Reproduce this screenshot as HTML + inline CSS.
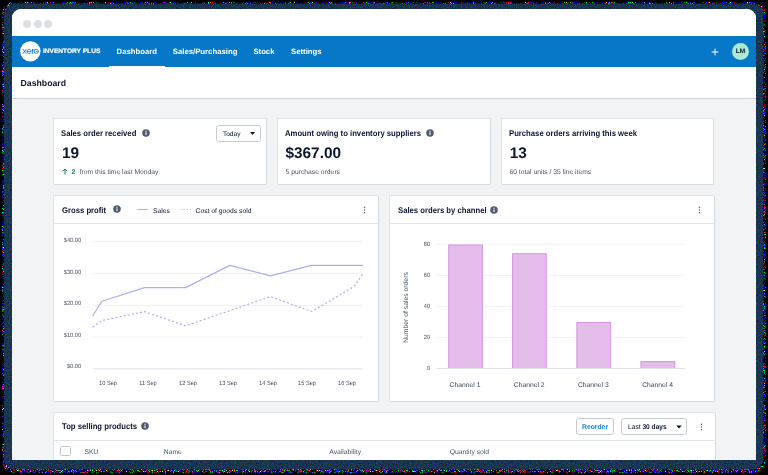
<!DOCTYPE html>
<html><head><meta charset="utf-8">
<style>
*{box-sizing:border-box;margin:0;padding:0}
html,body{width:768px;height:475px;overflow:hidden;background:#000}
body{font-family:"Liberation Sans",sans-serif;color:#0b1530;position:relative;text-rendering:geometricPrecision}
.abs{position:absolute}
#win{left:12px;top:8.5px;width:744px;height:451.5px;background:#f2f3f5;border-radius:9px 9px 0 0;overflow:hidden}
#pg{left:-12px;top:-8.5px;width:768px;height:475px;will-change:transform}
#titlebar{left:12px;top:8.5px;width:744px;height:27.8px;background:#fff}
.dot{width:8px;height:8px;border-radius:50%;background:#dcdfe4;top:20.1px}
#nav{left:12px;top:36.3px;width:744px;height:30.4px;background:#0678c7}
.navi{color:#fff;font-weight:bold;font-size:7.75px;line-height:10px;top:47.1px;white-space:nowrap}
#hdr{left:12px;top:67px;width:744px;height:32px;background:#fff;border-bottom:1px solid #ced2d8}
.card{background:#fff;border:1px solid #e1e4e8;border-right-color:#d8dbe0;border-bottom-color:#d8dbe0;border-radius:2px}
.ct{font-weight:bold;font-size:8.3px;line-height:10px;white-space:nowrap;transform:scaleX(.928);transform-origin:0 50%}
.big{font-weight:bold;font-size:15.4px;line-height:16px;white-space:nowrap}
.sub{font-size:6.75px;line-height:9px;color:#4a5366;white-space:nowrap}
.t{white-space:nowrap}
.ax{font-size:6.1px;line-height:9px;color:#414b5f;transform:scaleX(.92)}
.axr{transform-origin:100% 50%}
.btn{background:#fff;border:1px solid #c6cad2;border-radius:2.5px}
</style></head><body>
<svg class="abs" style="left:0;top:0" width="768" height="475" viewBox="0 0 768 475">
  <defs>
    <filter id="nz" x="0" y="0" width="100%" height="100%" color-interpolation-filters="sRGB">
      <feTurbulence type="fractalNoise" baseFrequency="0.85" numOctaves="2" seed="7"/>
      <feColorMatrix type="matrix" values="0.7 0 0 0 -0.25  0 0.7 0 0 -0.14  0 0 0.8 0 -0.08  0 0 0 0 1"/>
      <feComposite in2="SourceGraphic" operator="in"/>
    </filter>
    <filter id="sp" x="0" y="0" width="100%" height="100%" color-interpolation-filters="sRGB">
      <feTurbulence type="fractalNoise" baseFrequency="0.95" numOctaves="1" seed="11"/>
      <feColorMatrix type="matrix" values="9 0 0 0 -5.2  0 9 0 0 -5.2  0 0 7 0 -3.5  0 0 0 0 1"/>
      <feComposite in2="SourceGraphic" operator="in"/>
    </filter>
  </defs>
  <rect x="2" y="2" width="763.6" height="470.8" rx="12" fill="#fff" filter="url(#sp)"/>
  <rect x="4.2" y="3.8" width="759" height="465.4" rx="10.5" fill="#1b364f"/>
  <rect x="4.2" y="3.8" width="759" height="465.4" rx="10.5" fill="#fff" filter="url(#nz)" opacity="0.55"/>
</svg>
<div id="win" class="abs"><div id="pg" class="abs">
  <div id="titlebar" class="abs"></div>
  <div class="abs dot" style="left:23.4px"></div>
  <div class="abs dot" style="left:33.9px"></div>
  <div class="abs dot" style="left:44.2px"></div>

  <div id="nav" class="abs"></div>
  <svg class="abs" style="left:20px;top:40.6px" width="21" height="21" viewBox="20 40.6 21 21">
    <circle cx="30.35" cy="50.95" r="10.2" fill="#fff"/>
    <g stroke="#0678c7" stroke-width="0.85" fill="none" stroke-linecap="round">
      <path d="M23 48.9L26.2 53.1M26.2 48.9L23 53.1"/>
      <path d="M27.2 51H31.1A2.05 2.05 0 1 0 30.6 52.4"/>
      <path d="M32.4 53.1V48.9M32.4 50.6Q32.5 49 34.1 49"/>
      <circle cx="36.3" cy="51" r="2.05"/>
    </g>
    <circle cx="36.3" cy="51" r="0.55" fill="#0678c7"/>
  </svg>
  <div class="abs navi" style="left:42.9px;top:46.6px;font-size:6.6px;letter-spacing:0px;-webkit-text-stroke:0.18px #fff">INVENTORY PLUS</div>
  <div class="abs navi" style="left:116.6px">Dashboard</div>
  <div class="abs navi" style="left:172.8px">Sales/Purchasing</div>
  <div class="abs navi" style="left:253.4px">Stock</div>
  <div class="abs navi" style="left:291px">Settings</div>
  <div class="abs" style="left:108.9px;top:65.5px;width:56.2px;height:1.2px;background:#fff"></div>
  <svg class="abs" style="left:710.5px;top:47.5px" width="8" height="8" viewBox="0 0 8 8"><path d="M4 0.6V7.4M0.6 4H7.4" stroke="#fff" stroke-width="1" fill="none"/></svg>
  <div class="abs" style="left:732px;top:43px;width:17px;height:17px;border-radius:50%;background:#a8ead2"></div>
  <div class="abs" style="left:732px;top:46.8px;width:17px;font-size:6.6px;line-height:10px;font-weight:bold;text-align:center;color:#0b1530">LM</div>

  <div id="hdr" class="abs"></div>
  <div class="abs t" style="left:20.6px;top:78.2px;font-size:8.7px;line-height:10px;font-weight:bold">Dashboard</div>

  <!-- KPI cards -->
  <div class="abs card" style="left:53px;top:118px;width:214px;height:66.7px"></div>
  <div class="abs card" style="left:277px;top:118px;width:213.8px;height:66.7px"></div>
  <div class="abs card" style="left:501px;top:118px;width:213px;height:66.7px"></div>

  <div class="abs ct" style="left:61.2px;top:127.7px">Sales order received</div>
  <svg class="abs" style="left:140.6px;top:128.0px" width="10" height="10" viewBox="0 0 10 10"><circle cx="5" cy="5" r="3.75" fill="#4d5a70"/><rect x="4.45" y="4.4" width="1.1" height="2.7" fill="#fff"/><rect x="4.45" y="2.7" width="1.1" height="1.1" fill="#fff"/></svg>
  <div class="abs big" style="left:62px;top:146px">19</div>
  <svg class="abs" style="left:62.1px;top:168.1px" width="6" height="7" viewBox="0 0 6 7"><path d="M3 6.5V1M0.8 3.3L3 1L5.2 3.3" stroke="#0f8a3c" stroke-width="1" fill="none"/></svg>
  <div class="abs t" style="left:71.6px;top:168.2px;font-size:6.8px;line-height:9px;font-weight:bold;color:#0f8a3c">2</div>
  <div class="abs sub" style="left:79.7px;top:168.2px">from this time last Monday</div>
  <div class="abs btn" style="left:216.4px;top:125px;width:44.4px;height:16.7px"></div>
  <div class="abs t" style="left:222.9px;top:130.2px;font-size:6.6px;line-height:9px">Today</div>
  <svg class="abs" style="left:249.85px;top:131.6px" width="5" height="3" viewBox="0 0 5 3"><path d="M0.1 0.1H4.9L2.5 2.9Z" fill="#0b1530"/></svg>

  <div class="abs ct" style="left:285.1px;top:127.7px">Amount owing to inventory suppliers</div>
  <svg class="abs" style="left:424.7px;top:128.0px" width="10" height="10" viewBox="0 0 10 10"><circle cx="5" cy="5" r="3.75" fill="#4d5a70"/><rect x="4.45" y="4.4" width="1.1" height="2.7" fill="#fff"/><rect x="4.45" y="2.7" width="1.1" height="1.1" fill="#fff"/></svg>
  <div class="abs big" style="left:285.4px;top:146px">$367.00</div>
  <div class="abs sub" style="left:285.6px;top:168.2px">5 purchase orders</div>

  <div class="abs ct" style="left:508.9px;top:127.7px">Purchase orders arriving this week</div>
  <div class="abs big" style="left:509.8px;top:146px">13</div>
  <div class="abs sub" style="left:509.4px;top:168.2px">60 total units / 35 line items</div>
  <!-- chart cards -->
  <div class="abs card" style="left:389px;top:195px;width:326px;height:207px"></div>
  <div class="abs card" style="left:53px;top:195px;width:326px;height:207px"></div>
  <div class="abs" style="left:54px;top:223px;width:324px;height:1px;background:#e1e4e8"></div>
  <div class="abs ct" style="left:61.8px;top:204.8px">Gross profit</div>
  <svg class="abs" style="left:112.2px;top:204.4px" width="10" height="10" viewBox="0 0 10 10"><circle cx="5" cy="5" r="3.75" fill="#4d5a70"/><rect x="4.45" y="4.4" width="1.1" height="2.7" fill="#fff"/><rect x="4.45" y="2.7" width="1.1" height="1.1" fill="#fff"/></svg>
  <div class="abs" style="left:137px;top:209px;width:10.8px;height:1px;background:#b0b4f3"></div>
  <div class="abs sub" style="left:153.1px;top:206.5px;color:#0b1530">Sales</div>
  <svg class="abs" style="left:179px;top:208px" width="13" height="3" viewBox="0 0 13 3"><path d="M0.9 1.5H12" stroke="#b9bcf5" stroke-width="1" stroke-dasharray="1.5 1.9"/></svg>
  <div class="abs sub" style="left:195.6px;top:206.5px;color:#0b1530">Cost of goods sold</div>
  <svg class="abs" style="left:362.5px;top:205.8px" width="3" height="8" viewBox="0 0 3 8"><rect x="0.85" y="0.65" width="1.3" height="1.3" fill="#525e73"/><rect x="0.85" y="3.35" width="1.3" height="1.3" fill="#525e73"/><rect x="0.85" y="6.05" width="1.3" height="1.3" fill="#525e73"/></svg>
  <svg class="abs" style="left:0;top:0" width="768" height="475" viewBox="0 0 768 475">
<path d="M92.6 241.5 H362.9" stroke="#eff0f3" stroke-width="1"/>
<path d="M92.6 273.5 H362.9" stroke="#eff0f3" stroke-width="1"/>
<path d="M92.6 305.5 H362.9" stroke="#eff0f3" stroke-width="1"/>
<path d="M92.6 337 H362.9" stroke="#eff0f3" stroke-width="1"/>
<path d="M92.6 368.8 H362.9" stroke="#dfe2e6" stroke-width="1"/>
<path d="M92.6 316.0 L101.9 301.3 L144.5 287.6 L185.6 287.6 L229.7 265.4 L270.5 275.8 L311 265.4 L362.9 265.4" stroke="#abaff2" stroke-width="1.2" fill="none" stroke-linejoin="round"/>
<path d="M92.6 327.2 L101.9 320.6 L144.5 311.6 L185.6 325.9 L270.5 296.6 L311.7 311.6 L353.9 286.6 L362.9 274" stroke="#abaff2" stroke-width="1.2" fill="none" stroke-dasharray="2 2.2" stroke-linejoin="round"/>
<path d="M436.5 244.3 H685" stroke="#eff0f3" stroke-width="1"/>
<path d="M436.5 275.5 H685" stroke="#eff0f3" stroke-width="1"/>
<path d="M436.5 306.6 H685" stroke="#eff0f3" stroke-width="1"/>
<path d="M436.5 337.4 H685" stroke="#eff0f3" stroke-width="1"/>
<rect x="448.3" y="244.6" width="34.6" height="123.8" fill="#e4bdea"/><path d="M448.75 368.4V245.05H482.45V368.4" fill="none" stroke="#d795e0" stroke-width="0.9"/>
<rect x="512.1" y="253.3" width="34.6" height="115.1" fill="#e4bdea"/><path d="M512.55 368.4V253.75H546.25V368.4" fill="none" stroke="#d795e0" stroke-width="0.9"/>
<rect x="576.5" y="322.1" width="34.6" height="46.3" fill="#e4bdea"/><path d="M576.95 368.4V322.55H610.65V368.4" fill="none" stroke="#d795e0" stroke-width="0.9"/>
<rect x="640.6" y="361.1" width="34.6" height="7.3" fill="#e4bdea"/><path d="M641.05 368.4V361.55H674.75V368.4" fill="none" stroke="#d795e0" stroke-width="0.9"/>
<path d="M436.5 368.5 H685" stroke="#dfe2e6" stroke-width="1"/>
</svg>
  <div class="abs t ax axr" style="left:51.05px;width:30px;text-align:right;top:236.2px">$40.00</div>
  <div class="abs t ax axr" style="left:51.05px;width:30px;text-align:right;top:267.7px">$30.00</div>
  <div class="abs t ax axr" style="left:51.05px;width:30px;text-align:right;top:299.3px">$20.00</div>
  <div class="abs t ax axr" style="left:51.05px;width:30px;text-align:right;top:330.9px">$10.00</div>
  <div class="abs t ax axr" style="left:51.05px;width:30px;text-align:right;top:362.4px">$0.00</div>
  <div class="abs t ax" style="left:88.3px;width:40px;text-align:center;top:378.5px">10 Sep</div>
  <div class="abs t ax" style="left:128px;width:40px;text-align:center;top:378.5px">11 Sep</div>
  <div class="abs t ax" style="left:168.1px;width:40px;text-align:center;top:378.5px">12 Sep</div>
  <div class="abs t ax" style="left:207.6px;width:40px;text-align:center;top:378.5px">13 Sep</div>
  <div class="abs t ax" style="left:247.6px;width:40px;text-align:center;top:378.5px">14 Sep</div>
  <div class="abs t ax" style="left:287.4px;width:40px;text-align:center;top:378.5px">15 Sep</div>
  <div class="abs t ax" style="left:327.2px;width:40px;text-align:center;top:378.5px">16 Sep</div>
  <div class="abs" style="left:390px;top:223px;width:324px;height:1px;background:#e1e4e8"></div>
  <div class="abs ct" style="left:397.6px;top:204.8px">Sales orders by channel</div>
  <svg class="abs" style="left:488.9px;top:204.5px" width="10" height="10" viewBox="0 0 10 10"><circle cx="5" cy="5" r="3.75" fill="#4d5a70"/><rect x="4.45" y="4.4" width="1.1" height="2.7" fill="#fff"/><rect x="4.45" y="2.7" width="1.1" height="1.1" fill="#fff"/></svg>
  <svg class="abs" style="left:698px;top:205.8px" width="3" height="8" viewBox="0 0 3 8"><rect x="0.85" y="0.65" width="1.3" height="1.3" fill="#525e73"/><rect x="0.85" y="3.35" width="1.3" height="1.3" fill="#525e73"/><rect x="0.85" y="6.05" width="1.3" height="1.3" fill="#525e73"/></svg>
  <div class="abs t ax axr" style="left:400.3px;width:30px;text-align:right;top:240.0px">80</div>
  <div class="abs t ax axr" style="left:400.3px;width:30px;text-align:right;top:271.1px">60</div>
  <div class="abs t ax axr" style="left:400.3px;width:30px;text-align:right;top:302.2px">40</div>
  <div class="abs t ax axr" style="left:400.3px;width:30px;text-align:right;top:333.1px">20</div>
  <div class="abs t ax axr" style="left:400.3px;width:30px;text-align:right;top:364.1px">0</div>
  <div class="abs t sub" style="left:435px;width:60px;text-align:center;top:380.6px;color:#3c465a">Channel 1</div>
  <div class="abs t sub" style="left:499.2px;width:60px;text-align:center;top:380.6px;color:#3c465a">Channel 2</div>
  <div class="abs t sub" style="left:563.3px;width:60px;text-align:center;top:380.6px;color:#3c465a">Channel 3</div>
  <div class="abs t sub" style="left:627.6px;width:60px;text-align:center;top:380.6px;color:#3c465a">Channel 4</div>
  <div class="abs t" style="left:366.1px;top:303.4px;width:80px;height:9px;text-align:center;font-size:6.8px;line-height:9px;color:#4b566b;transform:rotate(-90deg)">Number of sales orders</div>
  <!-- table card -->
  <div class="abs card" style="left:53px;top:412px;width:663px;height:60px"></div>
  <div class="abs" style="left:54px;top:440px;width:661px;height:1px;background:#e1e4e8"></div>
  <div class="abs ct" style="left:61.8px;top:421.0px">Top selling products</div>
  <svg class="abs" style="left:140.4px;top:421.4px" width="10" height="10" viewBox="0 0 10 10"><circle cx="5" cy="5" r="3.75" fill="#4d5a70"/><rect x="4.45" y="4.4" width="1.1" height="2.7" fill="#fff"/><rect x="4.45" y="2.7" width="1.1" height="1.1" fill="#fff"/></svg>
  <div class="abs" style="left:60px;top:445.5px;width:10.5px;height:10.5px;background:#fff;border:1px solid #c3c8d0;border-radius:1.5px"></div>
  <div class="abs t sub" style="left:84.5px;top:447.9px;color:#4b566b">SKU</div>
  <div class="abs t sub" style="left:163.8px;top:447.9px;color:#4b566b">Name</div>
  <div class="abs t sub" style="left:329.3px;top:447.9px;color:#4b566b">Availability</div>
  <div class="abs t sub" style="left:449.7px;top:447.9px;color:#4b566b">Quantity sold</div>
  <div class="abs btn" style="left:576px;top:418.3px;width:38.3px;height:16.4px"></div>
  <div class="abs t" style="left:582.1px;top:423.2px;font-size:6.9px;line-height:9px;font-weight:bold;color:#1a82cd;transform:scaleX(.985);transform-origin:0 50%">Reorder</div>
  <div class="abs btn" style="left:621.2px;top:418.3px;width:65.5px;height:16.4px"></div>
  <div class="abs t" style="left:627.7px;top:423.2px;font-size:6.9px;line-height:9px;transform:scaleX(.963);transform-origin:0 50%">Last <b>30 days</b></div>
  <svg class="abs" style="left:675.5px;top:424.6px" width="6" height="4" viewBox="0 0 6 4"><path d="M0.2 0.4H5.8L3 3.6Z" fill="#0b1530"/></svg>
  <svg class="abs" style="left:699.5px;top:422.8px" width="3" height="8" viewBox="0 0 3 8"><rect x="0.85" y="0.65" width="1.3" height="1.3" fill="#525e73"/><rect x="0.85" y="3.35" width="1.3" height="1.3" fill="#525e73"/><rect x="0.85" y="6.05" width="1.3" height="1.3" fill="#525e73"/></svg>
</div></div>
</body></html>
